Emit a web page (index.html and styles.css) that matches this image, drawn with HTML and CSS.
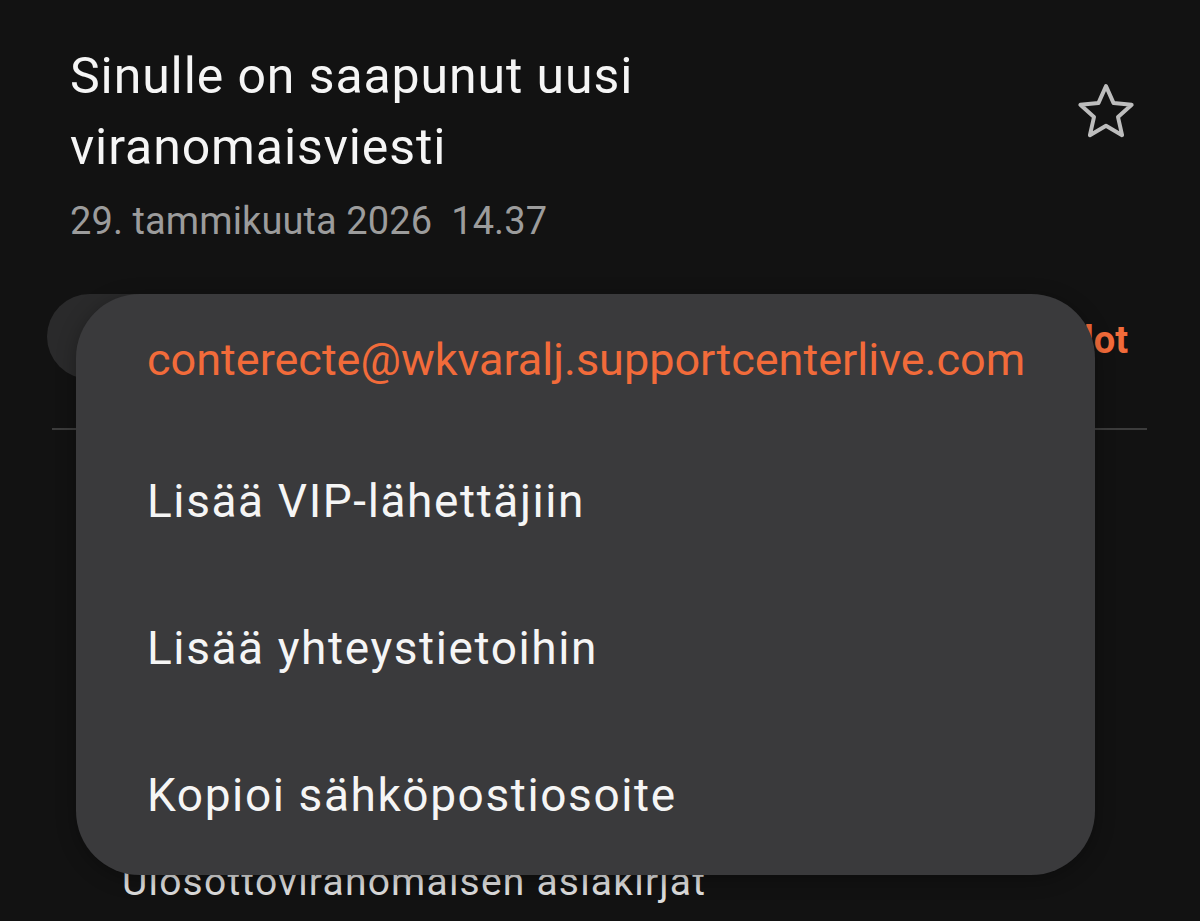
FILE: index.html
```html
<!DOCTYPE html>
<html lang="fi">
<head>
<meta charset="utf-8">
<link rel="stylesheet" href="styles.css">
</head>
<body>
<div class="screen">
  <header class="head">
    <div class="head-text">
      <h1 class="title">Sinulle on saapunut uusi viranomaisviesti</h1>
      <div class="date">29. tammikuuta 2026&nbsp; 14.37</div>
    </div>
    <svg class="star" viewBox="0 0 60 60" width="70" height="70">
      <path d="M30 7 L36.5 21.5 L52 23 L40.3 33.5 L43.8 49 L30 41 L16.2 49 L19.7 33.5 L8 23 L23.5 21.5 Z" fill="none" stroke="#bdbdbd" stroke-width="3.4" stroke-linejoin="round"/>
    </svg>
  </header>

  <div class="sender-row">
    <div class="chip"><span class="avatar"></span><span class="chip-name">Lähettäjä</span></div>
    <div class="details">Tiedot</div>
  </div>
  <div class="divider"></div>

  <div class="body">
    <p class="body-text">Ulosottoviranomaisen asiakirjat</p>
  </div>

  <div class="menu">
    <div class="menu-email">conterecte@wkvaralj.supportcenterlive.com</div>
    <div class="menu-item">Lisää VIP-lähettäjiin</div>
    <div class="menu-item">Lisää yhteystietoihin</div>
    <div class="menu-item">Kopioi sähköpostiosoite</div>
  </div>
</div>
</body>
</html>
```

FILE: styles.css
```css
html, body {
  margin: 0;
  padding: 0;
  background: #121212;
}
.screen {
  position: relative;
  width: 1200px;
  height: 921px;
  overflow: hidden;
  background: #121212;
  font-family: Roboto, "Noto Sans", sans-serif;
  color: #f2f2f2;
}
.head {
  display: flex;
  justify-content: space-between;
  align-items: flex-start;
  padding: 41px 59px 0 70px;
}
.title {
  margin: 0;
  width: 700px;
  font-size: 50px;
  font-weight: 400;
  letter-spacing: 0.9px;
  line-height: 71px;
  color: #f5f5f5;
}
.date {
  margin-top: 8px;
  font-size: 38px;
  letter-spacing: 0.1px;
  line-height: 60px;
  color: #9c9c9c;
}
.star {
  margin-top: 37px;
  flex: none;
}
.sender-row {
  display: flex;
  justify-content: space-between;
  align-items: center;
  margin-top: 43px;
  padding: 0 72px 0 47px;
  height: 85px;
}
.chip {
  display: flex;
  align-items: center;
  height: 85px;
  padding: 0 40px 0 38px;
  border-radius: 43px;
  background: #2a2a2b;
  gap: 16px;
}
.avatar {
  width: 44px;
  height: 44px;
  border-radius: 50%;
  border: 3px solid #e6e6e6;
  box-sizing: border-box;
}
.chip-name {
  font-size: 36px;
  color: #eee;
}
.details {
  padding-top: 6px;
  font-size: 38px;
  font-weight: 700;
  color: #f26b3a;
}
.divider {
  margin: 49px 53px 0 52px;
  height: 2px;
  background: #3c3c3c;
}
.body {
  padding: 0 0 0 122px;
}
.body-text {
  margin: 427px 0 0;
  font-size: 39px;
  letter-spacing: 1.2px;
  line-height: 50px;
  color: #dcdcdc;
}
.menu {
  position: absolute;
  left: 76px;
  top: 294px;
  width: 1019px;
  height: 581px;
  box-sizing: border-box;
  padding: 16px 0 0 71px;
  border-radius: 64px;
  background: #3a3a3c;
  box-shadow: 0 4px 20px rgba(0, 0, 0, 0.3);
}
.menu-email {
  font-size: 45px;
  line-height: 100px;
  margin-bottom: 18px;
  color: #f26b3a;
}
.menu-item {
  font-size: 46px;
  letter-spacing: 1.6px;
  line-height: 147px;
  color: #f5f5f5;
}
```
